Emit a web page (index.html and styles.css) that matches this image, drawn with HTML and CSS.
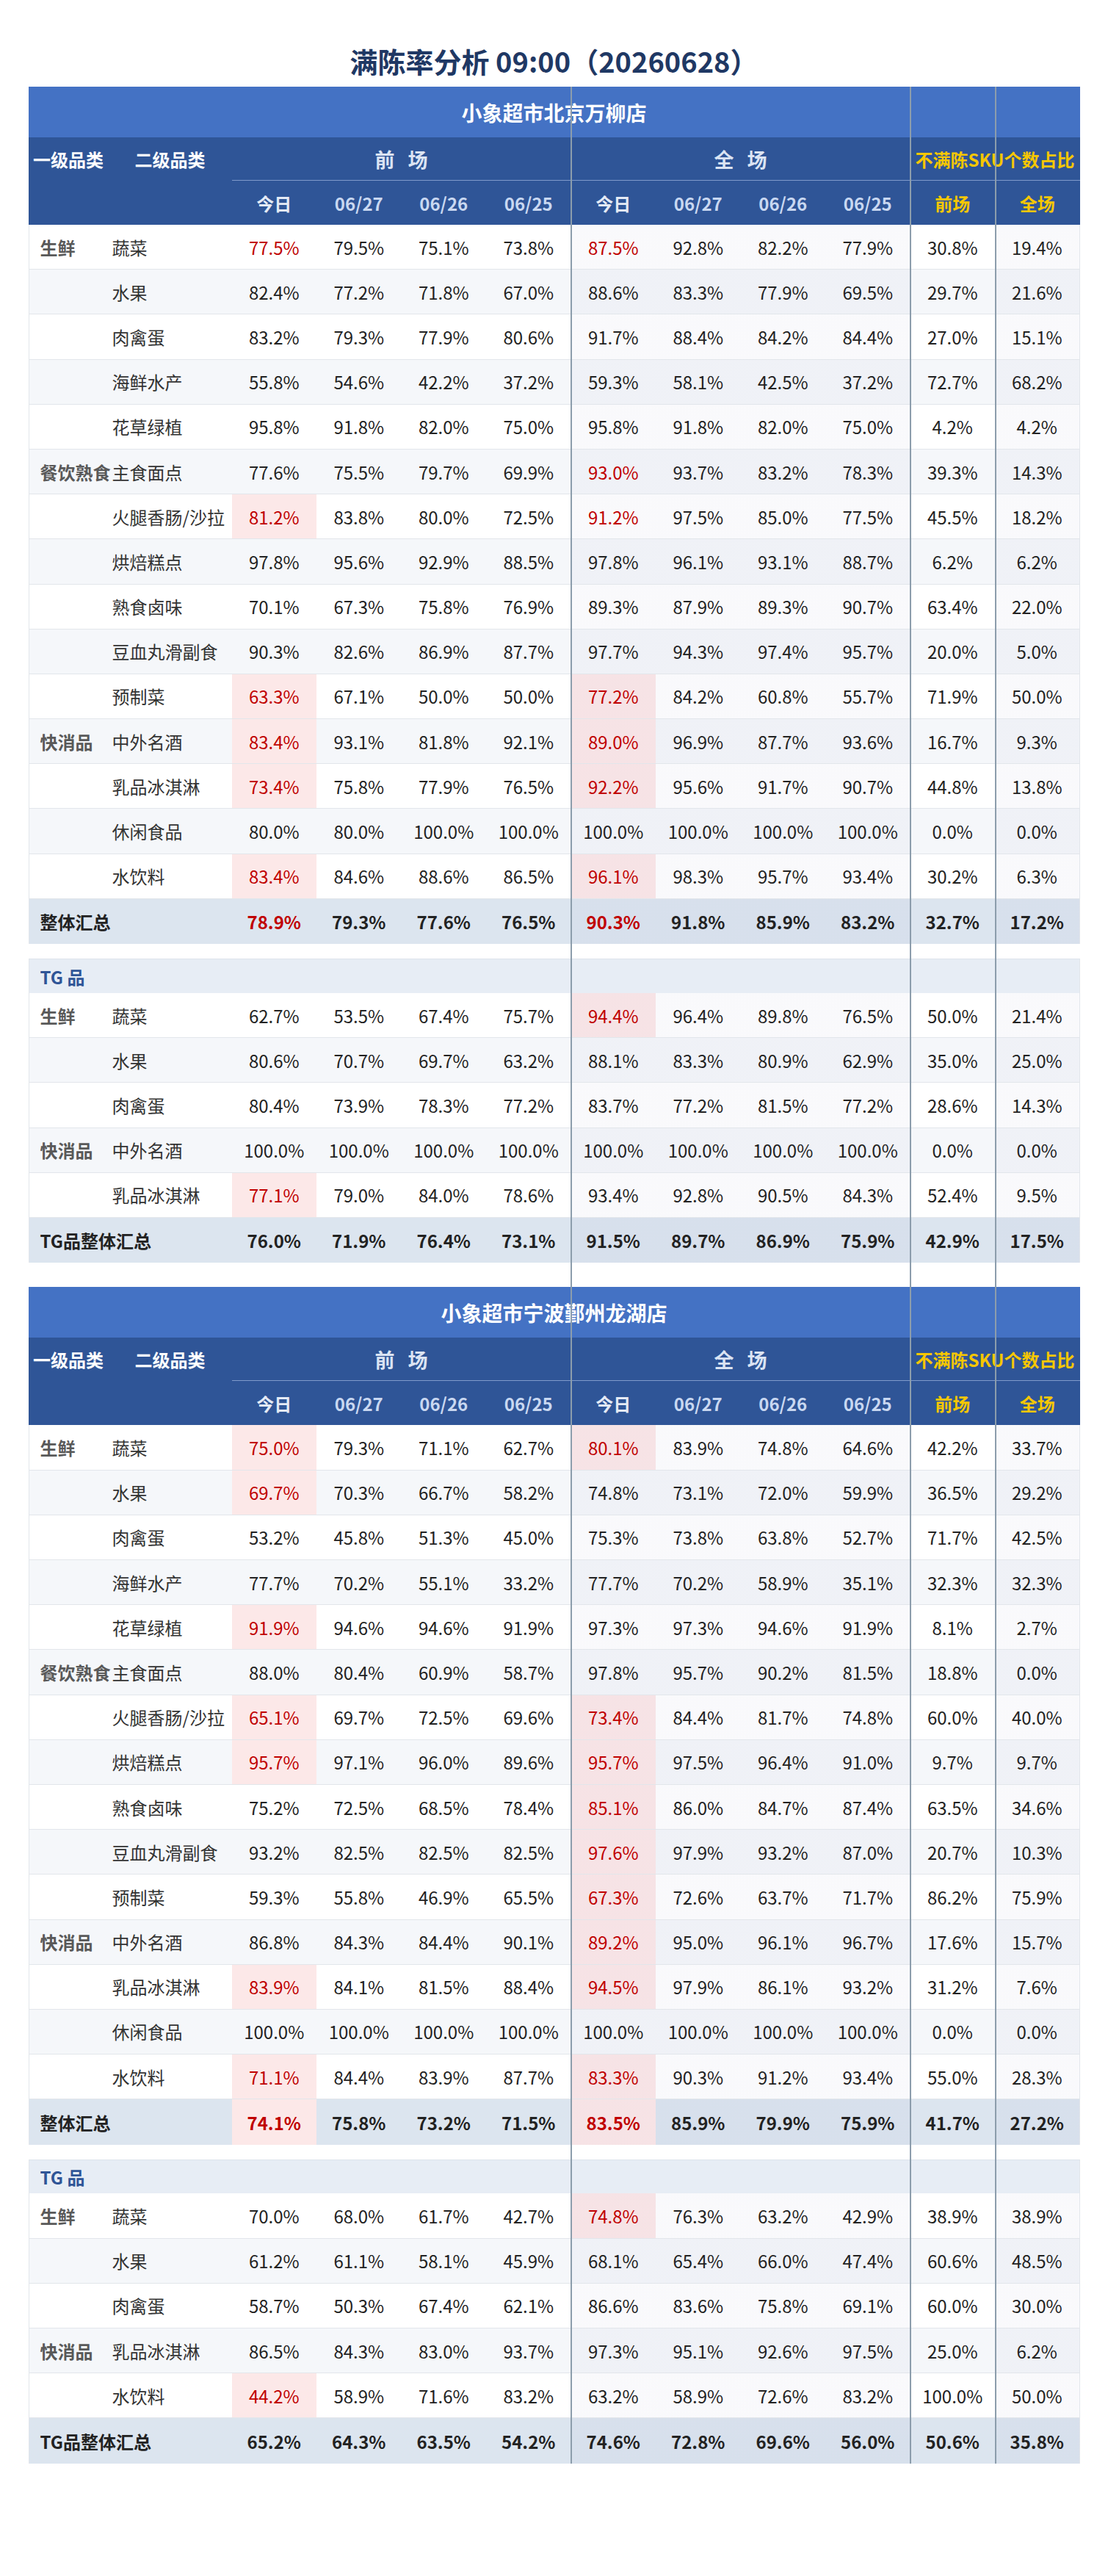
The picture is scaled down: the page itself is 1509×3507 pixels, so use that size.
FILE: index.html
```html
<!DOCTYPE html>
<html lang="zh-CN">
<head>
<meta charset="utf-8">
<title>满陈率分析</title>
<link rel="stylesheet" href="styles.css">
</head>
<body>
<div class="page">
  <h1 class="title">满陈率分析 09:00（20260628）</h1>
  <div class="report">
    <section class="store">
      <table class="grid">
        <colgroup><col class="w1"><col class="w2"><col><col><col><col><col><col><col><col><col><col></colgroup>
        <thead>
          <tr class="shop"><th colspan="12">小象超市北京万柳店</th></tr>
          <tr class="h1"><th class="lbl">一级品类</th><th class="lbl">二级品类</th><th class="grp" colspan="4">前 场</th><th class="grp" colspan="4">全 场</th><th class="grp sku" colspan="2">不满陈SKU个数占比</th></tr>
          <tr class="h2"><th></th><th></th><th class="td0">今日</th><th>06/27</th><th>06/26</th><th>06/25</th><th class="td0">今日</th><th>06/27</th><th>06/26</th><th>06/25</th><th class="y">前场</th><th class="y">全场</th></tr>
        </thead>
        <tbody class="body">
          <tr><td class="c1">生鲜</td><td class="c2">蔬菜</td><td class="r">77.5%</td><td>79.5%</td><td>75.1%</td><td>73.8%</td><td class="r">87.5%</td><td>92.8%</td><td>82.2%</td><td>77.9%</td><td>30.8%</td><td>19.4%</td></tr>
          <tr><td class="c1"></td><td class="c2">水果</td><td>82.4%</td><td>77.2%</td><td>71.8%</td><td>67.0%</td><td>88.6%</td><td>83.3%</td><td>77.9%</td><td>69.5%</td><td>29.7%</td><td>21.6%</td></tr>
          <tr><td class="c1"></td><td class="c2">肉禽蛋</td><td>83.2%</td><td>79.3%</td><td>77.9%</td><td>80.6%</td><td>91.7%</td><td>88.4%</td><td>84.2%</td><td>84.4%</td><td>27.0%</td><td>15.1%</td></tr>
          <tr><td class="c1"></td><td class="c2">海鲜水产</td><td>55.8%</td><td>54.6%</td><td>42.2%</td><td>37.2%</td><td>59.3%</td><td>58.1%</td><td>42.5%</td><td>37.2%</td><td>72.7%</td><td>68.2%</td></tr>
          <tr><td class="c1"></td><td class="c2">花草绿植</td><td>95.8%</td><td>91.8%</td><td>82.0%</td><td>75.0%</td><td>95.8%</td><td>91.8%</td><td>82.0%</td><td>75.0%</td><td>4.2%</td><td>4.2%</td></tr>
          <tr><td class="c1">餐饮熟食</td><td class="c2">主食面点</td><td>77.6%</td><td>75.5%</td><td>79.7%</td><td>69.9%</td><td class="r">93.0%</td><td>93.7%</td><td>83.2%</td><td>78.3%</td><td>39.3%</td><td>14.3%</td></tr>
          <tr><td class="c1"></td><td class="c2">火腿香肠/沙拉</td><td class="r p">81.2%</td><td>83.8%</td><td>80.0%</td><td>72.5%</td><td class="r">91.2%</td><td>97.5%</td><td>85.0%</td><td>77.5%</td><td>45.5%</td><td>18.2%</td></tr>
          <tr><td class="c1"></td><td class="c2">烘焙糕点</td><td>97.8%</td><td>95.6%</td><td>92.9%</td><td>88.5%</td><td>97.8%</td><td>96.1%</td><td>93.1%</td><td>88.7%</td><td>6.2%</td><td>6.2%</td></tr>
          <tr><td class="c1"></td><td class="c2">熟食卤味</td><td>70.1%</td><td>67.3%</td><td>75.8%</td><td>76.9%</td><td>89.3%</td><td>87.9%</td><td>89.3%</td><td>90.7%</td><td>63.4%</td><td>22.0%</td></tr>
          <tr><td class="c1"></td><td class="c2">豆血丸滑副食</td><td>90.3%</td><td>82.6%</td><td>86.9%</td><td>87.7%</td><td>97.7%</td><td>94.3%</td><td>97.4%</td><td>95.7%</td><td>20.0%</td><td>5.0%</td></tr>
          <tr><td class="c1"></td><td class="c2">预制菜</td><td class="r p">63.3%</td><td>67.1%</td><td>50.0%</td><td>50.0%</td><td class="r p">77.2%</td><td>84.2%</td><td>60.8%</td><td>55.7%</td><td>71.9%</td><td>50.0%</td></tr>
          <tr><td class="c1">快消品</td><td class="c2">中外名酒</td><td class="r p">83.4%</td><td>93.1%</td><td>81.8%</td><td>92.1%</td><td class="r p">89.0%</td><td>96.9%</td><td>87.7%</td><td>93.6%</td><td>16.7%</td><td>9.3%</td></tr>
          <tr><td class="c1"></td><td class="c2">乳品冰淇淋</td><td class="r p">73.4%</td><td>75.8%</td><td>77.9%</td><td>76.5%</td><td class="r p">92.2%</td><td>95.6%</td><td>91.7%</td><td>90.7%</td><td>44.8%</td><td>13.8%</td></tr>
          <tr><td class="c1"></td><td class="c2">休闲食品</td><td>80.0%</td><td>80.0%</td><td>100.0%</td><td>100.0%</td><td>100.0%</td><td>100.0%</td><td>100.0%</td><td>100.0%</td><td>0.0%</td><td>0.0%</td></tr>
          <tr><td class="c1"></td><td class="c2">水饮料</td><td class="r p">83.4%</td><td>84.6%</td><td>88.6%</td><td>86.5%</td><td class="r p">96.1%</td><td>98.3%</td><td>95.7%</td><td>93.4%</td><td>30.2%</td><td>6.3%</td></tr>
          <tr class="sum"><td class="c1" colspan="2">整体汇总</td><td class="r">78.9%</td><td>79.3%</td><td>77.6%</td><td>76.5%</td><td class="r">90.3%</td><td>91.8%</td><td>85.9%</td><td>83.2%</td><td>32.7%</td><td>17.2%</td></tr>
        </tbody>
      </table>
      <table class="grid">
        <colgroup><col class="w1"><col class="w2"><col><col><col><col><col><col><col><col><col><col></colgroup>
        <thead><tr class="tg"><td colspan="12">TG 品</td></tr></thead>
        <tbody class="body">
          <tr><td class="c1">生鲜</td><td class="c2">蔬菜</td><td>62.7%</td><td>53.5%</td><td>67.4%</td><td>75.7%</td><td class="r p">94.4%</td><td>96.4%</td><td>89.8%</td><td>76.5%</td><td>50.0%</td><td>21.4%</td></tr>
          <tr><td class="c1"></td><td class="c2">水果</td><td>80.6%</td><td>70.7%</td><td>69.7%</td><td>63.2%</td><td>88.1%</td><td>83.3%</td><td>80.9%</td><td>62.9%</td><td>35.0%</td><td>25.0%</td></tr>
          <tr><td class="c1"></td><td class="c2">肉禽蛋</td><td>80.4%</td><td>73.9%</td><td>78.3%</td><td>77.2%</td><td>83.7%</td><td>77.2%</td><td>81.5%</td><td>77.2%</td><td>28.6%</td><td>14.3%</td></tr>
          <tr><td class="c1">快消品</td><td class="c2">中外名酒</td><td>100.0%</td><td>100.0%</td><td>100.0%</td><td>100.0%</td><td>100.0%</td><td>100.0%</td><td>100.0%</td><td>100.0%</td><td>0.0%</td><td>0.0%</td></tr>
          <tr><td class="c1"></td><td class="c2">乳品冰淇淋</td><td class="r p">77.1%</td><td>79.0%</td><td>84.0%</td><td>78.6%</td><td>93.4%</td><td>92.8%</td><td>90.5%</td><td>84.3%</td><td>52.4%</td><td>9.5%</td></tr>
          <tr class="sum"><td class="c1" colspan="2">TG品整体汇总</td><td>76.0%</td><td>71.9%</td><td>76.4%</td><td>73.1%</td><td>91.5%</td><td>89.7%</td><td>86.9%</td><td>75.9%</td><td>42.9%</td><td>17.5%</td></tr>
        </tbody>
      </table>
    </section>

    <section class="store">
      <table class="grid">
        <colgroup><col class="w1"><col class="w2"><col><col><col><col><col><col><col><col><col><col></colgroup>
        <thead>
          <tr class="shop"><th colspan="12">小象超市宁波鄞州龙湖店</th></tr>
          <tr class="h1"><th class="lbl">一级品类</th><th class="lbl">二级品类</th><th class="grp" colspan="4">前 场</th><th class="grp" colspan="4">全 场</th><th class="grp sku" colspan="2">不满陈SKU个数占比</th></tr>
          <tr class="h2"><th></th><th></th><th class="td0">今日</th><th>06/27</th><th>06/26</th><th>06/25</th><th class="td0">今日</th><th>06/27</th><th>06/26</th><th>06/25</th><th class="y">前场</th><th class="y">全场</th></tr>
        </thead>
        <tbody class="body">
          <tr><td class="c1">生鲜</td><td class="c2">蔬菜</td><td class="r p">75.0%</td><td>79.3%</td><td>71.1%</td><td>62.7%</td><td class="r p">80.1%</td><td>83.9%</td><td>74.8%</td><td>64.6%</td><td>42.2%</td><td>33.7%</td></tr>
          <tr><td class="c1"></td><td class="c2">水果</td><td class="r p">69.7%</td><td>70.3%</td><td>66.7%</td><td>58.2%</td><td>74.8%</td><td>73.1%</td><td>72.0%</td><td>59.9%</td><td>36.5%</td><td>29.2%</td></tr>
          <tr><td class="c1"></td><td class="c2">肉禽蛋</td><td>53.2%</td><td>45.8%</td><td>51.3%</td><td>45.0%</td><td>75.3%</td><td>73.8%</td><td>63.8%</td><td>52.7%</td><td>71.7%</td><td>42.5%</td></tr>
          <tr><td class="c1"></td><td class="c2">海鲜水产</td><td>77.7%</td><td>70.2%</td><td>55.1%</td><td>33.2%</td><td>77.7%</td><td>70.2%</td><td>58.9%</td><td>35.1%</td><td>32.3%</td><td>32.3%</td></tr>
          <tr><td class="c1"></td><td class="c2">花草绿植</td><td class="r p">91.9%</td><td>94.6%</td><td>94.6%</td><td>91.9%</td><td>97.3%</td><td>97.3%</td><td>94.6%</td><td>91.9%</td><td>8.1%</td><td>2.7%</td></tr>
          <tr><td class="c1">餐饮熟食</td><td class="c2">主食面点</td><td>88.0%</td><td>80.4%</td><td>60.9%</td><td>58.7%</td><td>97.8%</td><td>95.7%</td><td>90.2%</td><td>81.5%</td><td>18.8%</td><td>0.0%</td></tr>
          <tr><td class="c1"></td><td class="c2">火腿香肠/沙拉</td><td class="r p">65.1%</td><td>69.7%</td><td>72.5%</td><td>69.6%</td><td class="r p">73.4%</td><td>84.4%</td><td>81.7%</td><td>74.8%</td><td>60.0%</td><td>40.0%</td></tr>
          <tr><td class="c1"></td><td class="c2">烘焙糕点</td><td class="r p">95.7%</td><td>97.1%</td><td>96.0%</td><td>89.6%</td><td class="r p">95.7%</td><td>97.5%</td><td>96.4%</td><td>91.0%</td><td>9.7%</td><td>9.7%</td></tr>
          <tr><td class="c1"></td><td class="c2">熟食卤味</td><td>75.2%</td><td>72.5%</td><td>68.5%</td><td>78.4%</td><td class="r p">85.1%</td><td>86.0%</td><td>84.7%</td><td>87.4%</td><td>63.5%</td><td>34.6%</td></tr>
          <tr><td class="c1"></td><td class="c2">豆血丸滑副食</td><td>93.2%</td><td>82.5%</td><td>82.5%</td><td>82.5%</td><td class="r p">97.6%</td><td>97.9%</td><td>93.2%</td><td>87.0%</td><td>20.7%</td><td>10.3%</td></tr>
          <tr><td class="c1"></td><td class="c2">预制菜</td><td>59.3%</td><td>55.8%</td><td>46.9%</td><td>65.5%</td><td class="r p">67.3%</td><td>72.6%</td><td>63.7%</td><td>71.7%</td><td>86.2%</td><td>75.9%</td></tr>
          <tr><td class="c1">快消品</td><td class="c2">中外名酒</td><td>86.8%</td><td>84.3%</td><td>84.4%</td><td>90.1%</td><td class="r p">89.2%</td><td>95.0%</td><td>96.1%</td><td>96.7%</td><td>17.6%</td><td>15.7%</td></tr>
          <tr><td class="c1"></td><td class="c2">乳品冰淇淋</td><td class="r p">83.9%</td><td>84.1%</td><td>81.5%</td><td>88.4%</td><td class="r p">94.5%</td><td>97.9%</td><td>86.1%</td><td>93.2%</td><td>31.2%</td><td>7.6%</td></tr>
          <tr><td class="c1"></td><td class="c2">休闲食品</td><td>100.0%</td><td>100.0%</td><td>100.0%</td><td>100.0%</td><td>100.0%</td><td>100.0%</td><td>100.0%</td><td>100.0%</td><td>0.0%</td><td>0.0%</td></tr>
          <tr><td class="c1"></td><td class="c2">水饮料</td><td class="r p">71.1%</td><td>84.4%</td><td>83.9%</td><td>87.7%</td><td class="r p">83.3%</td><td>90.3%</td><td>91.2%</td><td>93.4%</td><td>55.0%</td><td>28.3%</td></tr>
          <tr class="sum"><td class="c1" colspan="2">整体汇总</td><td class="r p">74.1%</td><td>75.8%</td><td>73.2%</td><td>71.5%</td><td class="r p">83.5%</td><td>85.9%</td><td>79.9%</td><td>75.9%</td><td>41.7%</td><td>27.2%</td></tr>
        </tbody>
      </table>
      <table class="grid">
        <colgroup><col class="w1"><col class="w2"><col><col><col><col><col><col><col><col><col><col></colgroup>
        <thead><tr class="tg"><td colspan="12">TG 品</td></tr></thead>
        <tbody class="body">
          <tr><td class="c1">生鲜</td><td class="c2">蔬菜</td><td>70.0%</td><td>68.0%</td><td>61.7%</td><td>42.7%</td><td class="r p">74.8%</td><td>76.3%</td><td>63.2%</td><td>42.9%</td><td>38.9%</td><td>38.9%</td></tr>
          <tr><td class="c1"></td><td class="c2">水果</td><td>61.2%</td><td>61.1%</td><td>58.1%</td><td>45.9%</td><td>68.1%</td><td>65.4%</td><td>66.0%</td><td>47.4%</td><td>60.6%</td><td>48.5%</td></tr>
          <tr><td class="c1"></td><td class="c2">肉禽蛋</td><td>58.7%</td><td>50.3%</td><td>67.4%</td><td>62.1%</td><td>86.6%</td><td>83.6%</td><td>75.8%</td><td>69.1%</td><td>60.0%</td><td>30.0%</td></tr>
          <tr><td class="c1">快消品</td><td class="c2">乳品冰淇淋</td><td>86.5%</td><td>84.3%</td><td>83.0%</td><td>93.7%</td><td>97.3%</td><td>95.1%</td><td>92.6%</td><td>97.5%</td><td>25.0%</td><td>6.2%</td></tr>
          <tr><td class="c1"></td><td class="c2">水饮料</td><td class="r p">44.2%</td><td>58.9%</td><td>71.6%</td><td>83.2%</td><td>63.2%</td><td>58.9%</td><td>72.6%</td><td>83.2%</td><td>100.0%</td><td>50.0%</td></tr>
          <tr class="sum"><td class="c1" colspan="2">TG品整体汇总</td><td>65.2%</td><td>64.3%</td><td>63.5%</td><td>54.2%</td><td>74.6%</td><td>72.8%</td><td>69.6%</td><td>56.0%</td><td>50.6%</td><td>35.8%</td></tr>
        </tbody>
      </table>
    </section>

    <div class="vline v1"></div>
    <div class="vline v2"></div>
    <div class="vline v3"></div>
  </div>
</div>
</body>
</html>
```

FILE: styles.css
```css
* { box-sizing: border-box; }

html, body {
  margin: 0;
  padding: 0;
  background: #ffffff;
}

body {
  font-family: "Noto Sans CJK SC", "Noto Sans", sans-serif;
  color: #222222;
}

.page {
  width: 1432px;
  margin: 0 auto;
}

.title {
  margin: 0;
  height: 118px;
  padding-top: 60px;
  line-height: 46px;
  font-size: 38px;
  font-weight: 700;
  color: #1f3864;
  text-align: center;
  white-space: nowrap;
}

.report {
  position: relative;
  display: flex;
  flex-direction: column;
  gap: 33px;
}

.store {
  display: flex;
  flex-direction: column;
  gap: 20px;
}

.grid {
  width: 1432px;
  table-layout: fixed;
  border-collapse: separate;
  border-spacing: 0;
}

.w1 { width: 109px; }
.w2 { width: 168px; }

.grid th,
.grid td {
  padding: 0;
  white-space: nowrap;
  vertical-align: middle;
  text-align: center;
  font-size: 24px;
  font-weight: 400;
}

/* ---------- header ---------- */
.shop th {
  height: 69px;
  background: #4472c4;
  color: #ffffff;
  font-size: 28px;
  font-weight: 700;
}

.h1 th {
  height: 59px;
  background: #2f5597;
  font-weight: 700;
}

.h2 th {
  height: 60px;
  background: #2f5597;
  font-weight: 700;
  font-size: 24px;
  color: #c9d8f1;
}

.lbl {
  font-size: 22px;
  color: #ffffff;
}

.h1 .grp {
  font-size: 27px;
  color: #dbe4f3;
  word-spacing: 12px;
  border-bottom: 1px solid #7f9acb;
}

.h1 .sku {
  font-size: 24px;
  word-spacing: 0;
  color: #f6c700;
}

.h2 .td0 { color: #e4eaf5; }
.h2 .y { color: #f6c700; }

/* ---------- body ---------- */
.body td {
  height: 61.2px;
  color: #222222;
  border-bottom: 1px solid #e2e6eb;
  background-color: #ffffff;
}

.body td:first-child { border-left: 1px solid #e2e6eb; }
.body td:last-child { border-right: 1px solid #e2e6eb; }

.body tr:nth-child(even) td { background-color: #f5f7fa; }

/* 全场 columns are slightly tinted */
.body tr td:nth-child(n+7):nth-child(-n+10),
.body tr td:nth-child(12),
.body tr.sum td:nth-child(n+6):nth-child(-n+9),
.body tr.sum td:nth-child(11) {
  background-image: linear-gradient(rgba(70, 70, 150, 0.03), rgba(70, 70, 150, 0.03));
}
.body tr.sum td:nth-child(10) { background-image: none; }
.body tr.sum td:nth-child(12) { background-image: none; }

.body .c1 {
  text-align: left;
  padding-left: 15px;
  font-weight: 700;
  color: #595959;
}

.body .c2 {
  text-align: left;
  padding-left: 5px;
  color: #333333;
}

.body tr.sum td {
  height: 61.5px;
  background-color: #dce5ef;
  font-weight: 700;
  color: #222222;
  border-bottom: none;
}

.body tr.sum .c1 { color: #222222; }

.body tr td.r { color: #c00000; }
.body tr td.p { background-color: #fce8e8; }

/* ---------- TG label row ---------- */
.tg td {
  height: 46.7px;
  background: #e7edf5;
  color: #2f5597;
  font-weight: 700;
  text-align: left;
  padding-left: 15px;
  border-top: 1px solid #dde3eb;
  border-left: 1px solid #e2e6eb;
  border-right: 1px solid #e2e6eb;
}

/* ---------- divider overlay ---------- */
.vline {
  position: absolute;
  top: 0;
  bottom: 0;
  width: 2px;
  background: #8c9dac;
}

.v1 { left: 738px; }
.v2 { left: 1200px; }
.v3 { left: 1316px; }
```
